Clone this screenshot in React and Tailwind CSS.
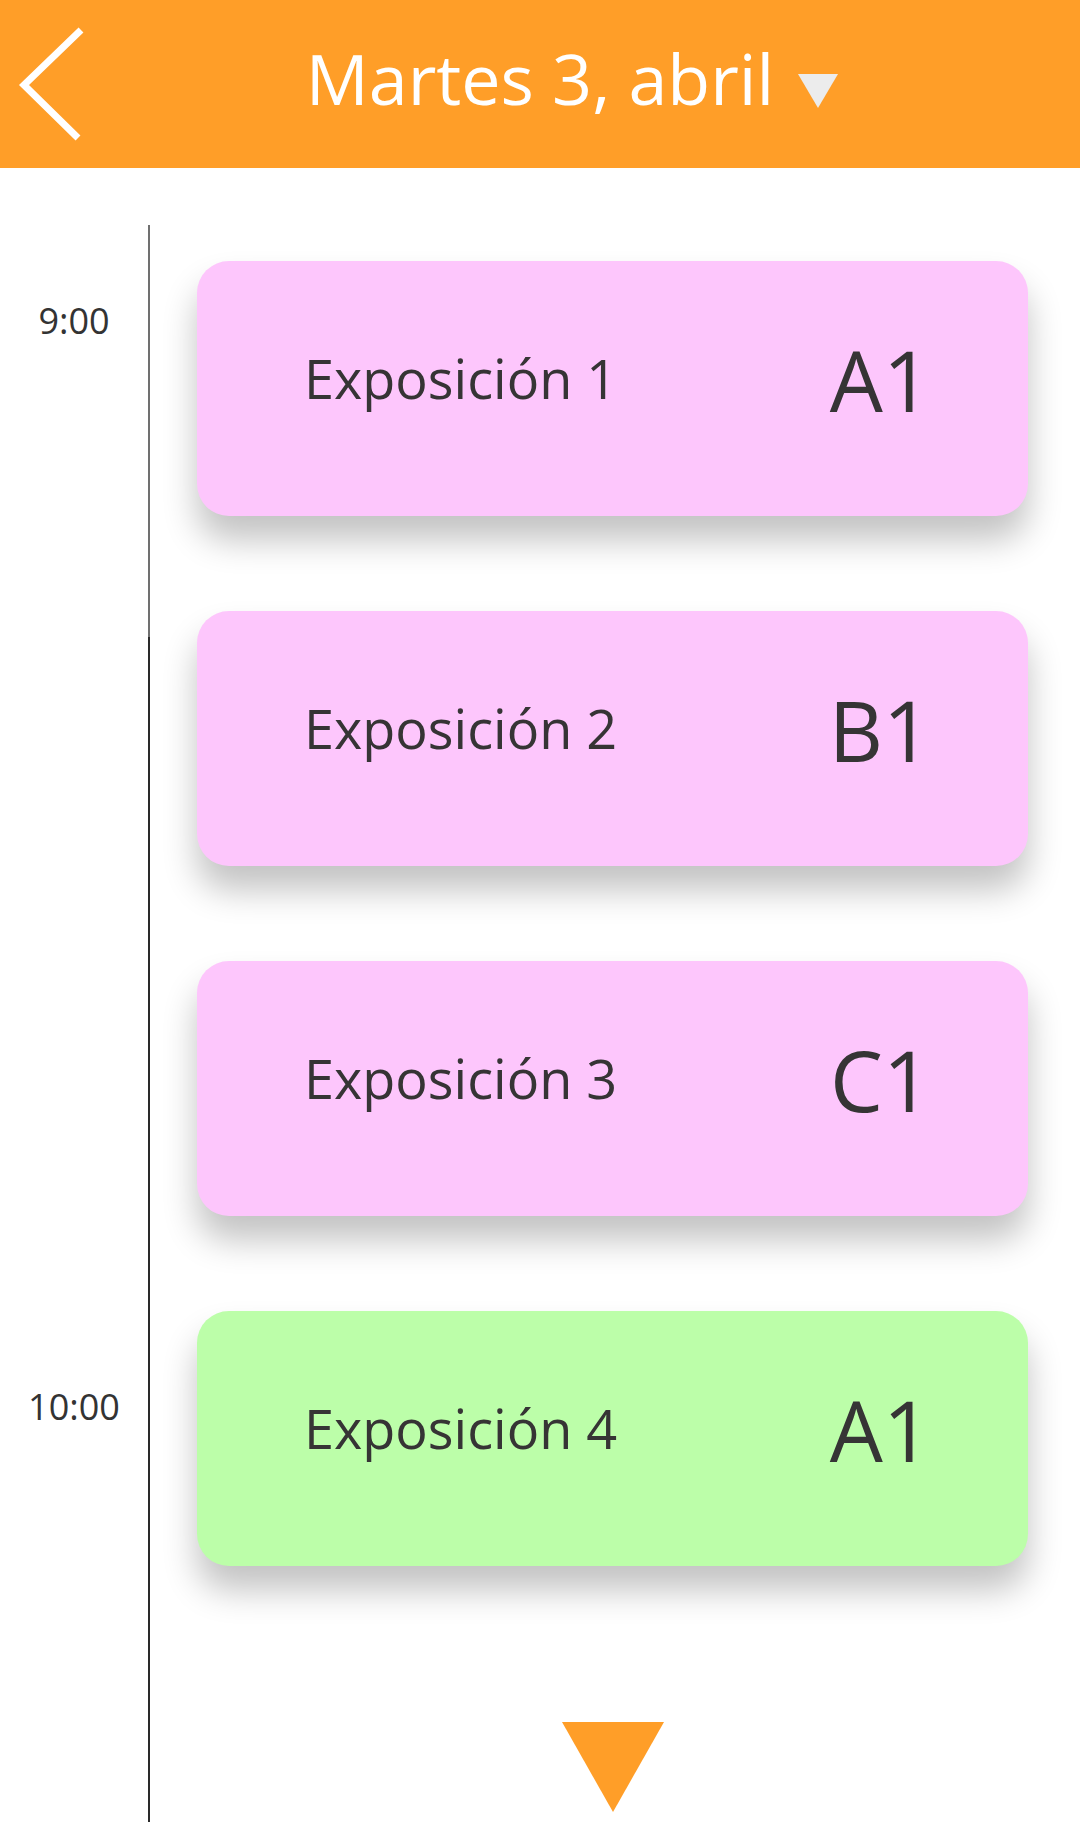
const SESSIONS = [
  { title: "Exposición 1", room: "A1", color: "bg-[#fdc6fc]" },
  { title: "Exposición 2", room: "B1", color: "bg-[#fdc6fc]" },
  { title: "Exposición 3", room: "C1", color: "bg-[#fdc6fc]" },
  { title: "Exposición 4", room: "A1", color: "bg-[#bcfea9]" },
];

const SessionCard = ({ title, room, color }) => (
  <div
    className={`w-[831px] h-[255px] rounded-[32px] flex items-start justify-between pl-[107px] pr-[97px] shadow-[0_24px_34px_rgba(0,0,0,0.24)] ${color}`}
  >
    <span className="mt-[90px] text-[54px] leading-none text-[#363435]">{title}</span>
    <span className="mt-[77px] text-[84px] leading-none text-[#363435]">{room}</span>
  </div>
);

const App = () => {
  return (
    <div className="w-[1080px] h-[1822px] overflow-hidden bg-white font-['Open_Sans','Noto_Sans',sans-serif]">
      <header className="h-[168px] bg-[#ff9e28] grid grid-cols-[1fr_auto_1fr] items-center">
        <div className="h-[168px]">
          <svg width="100" height="168" viewBox="0 0 100 168">
            <polyline points="81,30 24,85 78,138" fill="none" stroke="#fff" strokeWidth="7" />
          </svg>
        </div>
        <h1 className="mb-[12px] text-[70px] leading-none text-white">Martes 3, abril</h1>
        <div>
          <svg className="ml-[24px] mt-[14px]" width="40" height="34" viewBox="0 0 40 34">
            <polygon points="0,0 40,0 20,34" fill="#ececec" />
          </svg>
        </div>
      </header>

      <div className="flex h-[1654px]">
        <div className="w-[148px] flex flex-col items-center pt-[133px] text-[36px] leading-[40px] text-[#333]">
          <span>9:00</span>
          <span className="mt-[1046px]">10:00</span>
        </div>

        <div className="w-[2px] mt-[57px] flex flex-col">
          <div className="h-[412px] bg-[#707070]" />
          <div className="flex-1 bg-[#2a2a2a]" />
        </div>

        <div className="ml-[47px] pt-[93px] flex flex-col items-center">
          <div className="flex flex-col gap-[95px]">
            {SESSIONS.map((s, i) => (
              <SessionCard key={i} {...s} />
            ))}
          </div>
          <svg className="mt-[156px]" width="102" height="90" viewBox="0 0 102 90">
            <polygon points="0,0 102,0 51,90" fill="#ff9e28" />
          </svg>
        </div>
      </div>
    </div>
  );
};

export default App;
